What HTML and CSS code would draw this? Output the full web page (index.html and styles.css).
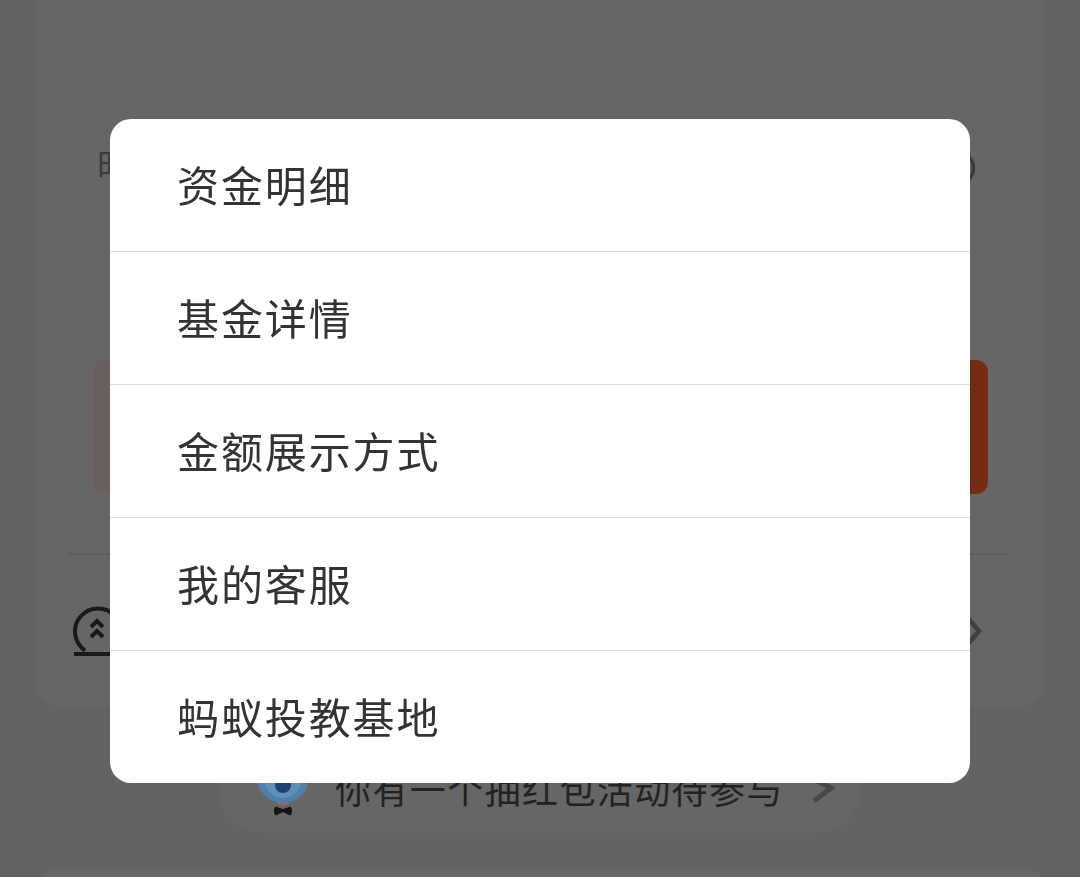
FILE: index.html
```html
<!DOCTYPE html>
<html lang="zh-CN">
<head>
<meta charset="utf-8">
<title>基金</title>
<link rel="stylesheet" href="styles.css">
</head>
<body>
<div class="page">
  <section class="card">
    <div class="summary">
      <span class="summary-label">时间</span>
      <svg class="info-icon" width="38" height="38" viewBox="0 0 38 38"><circle cx="19" cy="19" r="16.5" fill="none" stroke="#3a3a3a" stroke-width="3.5"/></svg>
    </div>
    <div class="panel">
      <div class="panel-main"></div>
      <div class="panel-action"></div>
    </div>
    <div class="divider"></div>
    <div class="link-row">
      <svg class="link-icon" width="52" height="52" viewBox="0 0 52 52">
        <path d="M13 45.5A23 23 0 1 1 39 45.5" fill="none" stroke="#1a1a1a" stroke-width="4"/>
        <path d="M2 49H50" fill="none" stroke="#1a1a1a" stroke-width="4"/>
        <path d="M19 22L25 16L31 22M19 32L25 26L31 32" fill="none" stroke="#1a1a1a" stroke-width="4"/>
      </svg>
      <svg class="link-chevron" width="16" height="28" viewBox="0 0 16 28"><path d="M2 2L12 14L2 26" fill="none" stroke="#404040" stroke-width="4.5"/></svg>
    </div>
  </section>
  <div class="pill">
    <svg class="mascot" width="54" height="70" viewBox="0 0 54 70">
      <circle cx="27" cy="27" r="26" fill="#4f7fab"/>
      <circle cx="27" cy="30" r="18" fill="#638fb6"/>
      <circle cx="27" cy="35" r="8" fill="#1f4176"/>
      <path d="M20 53Q27 58 34 53Q27 50 20 53Z" fill="#8a6d80"/>
      <path d="M21 57Q18 56 18 61Q18 66 21 65L27 62L33 65Q36 66 36 61Q36 56 33 57L27 59Z" fill="#141414"/>
    </svg>
    <span class="pill-text">你有一个抽红包活动待参与</span>
    <svg class="pill-chevron" width="28" height="32" viewBox="0 0 28 32"><path d="M4 4L23 14L6 27" fill="none" stroke="#484848" stroke-width="5"/></svg>
  </div>
  <section class="card-next"></section>
</div>
<div class="overlay">
  <ul class="menu">
    <li class="menu-item">资金明细</li>
    <li class="menu-item">基金详情</li>
    <li class="menu-item">金额展示方式</li>
    <li class="menu-item">我的客服</li>
    <li class="menu-item">蚂蚁投教基地</li>
  </ul>
</div>
</body>
</html>
```

FILE: styles.css
```css
* { box-sizing: border-box; }
html, body { margin: 0; height: 877px; overflow: hidden; }
body { font-family: "Noto Sans CJK SC", "Noto Sans", sans-serif; background: #636363; }

.page { height: 877px; display: flex; flex-direction: column; overflow: hidden; }

.card {
  flex: none;
  height: 707px;
  margin: 0 35px 0 36px;
  padding-top: 147px;
  background: #666;
  border-radius: 0 0 24px 24px;
  display: flex;
  flex-direction: column;
}
.summary {
  height: 42px;
  margin: 0 69px 0 61px;
  display: flex;
  justify-content: space-between;
  align-items: center;
}
.summary-label { align-self: flex-start; font-size: 34px; line-height: 34px; color: #3a3a3a; }
.panel {
  height: 134px;
  margin: 171px 57px 0;
  border-radius: 12px;
  overflow: hidden;
  display: flex;
}
.panel-main { flex: 1; background: #6a5f5b; }
.panel-action { width: 220px; background: #742c12; }
.divider { height: 2px; margin: 59px 36px 0 33px; background: #5d5d5d; }
.link-row {
  margin: 49px 62px 0 36px;
  display: flex;
  justify-content: space-between;
  align-items: center;
}
.link-icon { margin-top: 1px; }

.pill {
  flex: none;
  width: 640px;
  height: 83px;
  margin: 43px 0 0 220px;
  padding-left: 36px;
  background: #666;
  border-radius: 0 0 40px 40px;
  display: flex;
  align-items: flex-start;
}
.mascot { flex: none; }
.pill-text {
  margin: 11px 0 0 25px;
  font-size: 36px;
  letter-spacing: 1.4px;
  line-height: 54px;
  color: #222;
  white-space: nowrap;
}
.pill-chevron { margin: 24px 0 0 24px; flex: none; }

.card-next {
  flex: none;
  height: 60px;
  margin: 33px 35px 0 36px;
  background: #666;
  border-radius: 24px 24px 0 0;
}

.overlay {
  position: fixed;
  inset: 0;
  padding: 119px 110px 0;
}
.menu {
  list-style: none;
  margin: 0;
  padding: 0;
  background: #fff;
  border-radius: 21px;
  overflow: hidden;
}
.menu-item {
  height: 133px;
  padding-left: 67px;
  font-size: 42px;
  letter-spacing: 1.9px;
  line-height: 129px;
  color: #333;
  border-bottom: 1px solid #dcdcdc;
}
.menu-item:last-child { border-bottom: 0; height: 132px; }
```
